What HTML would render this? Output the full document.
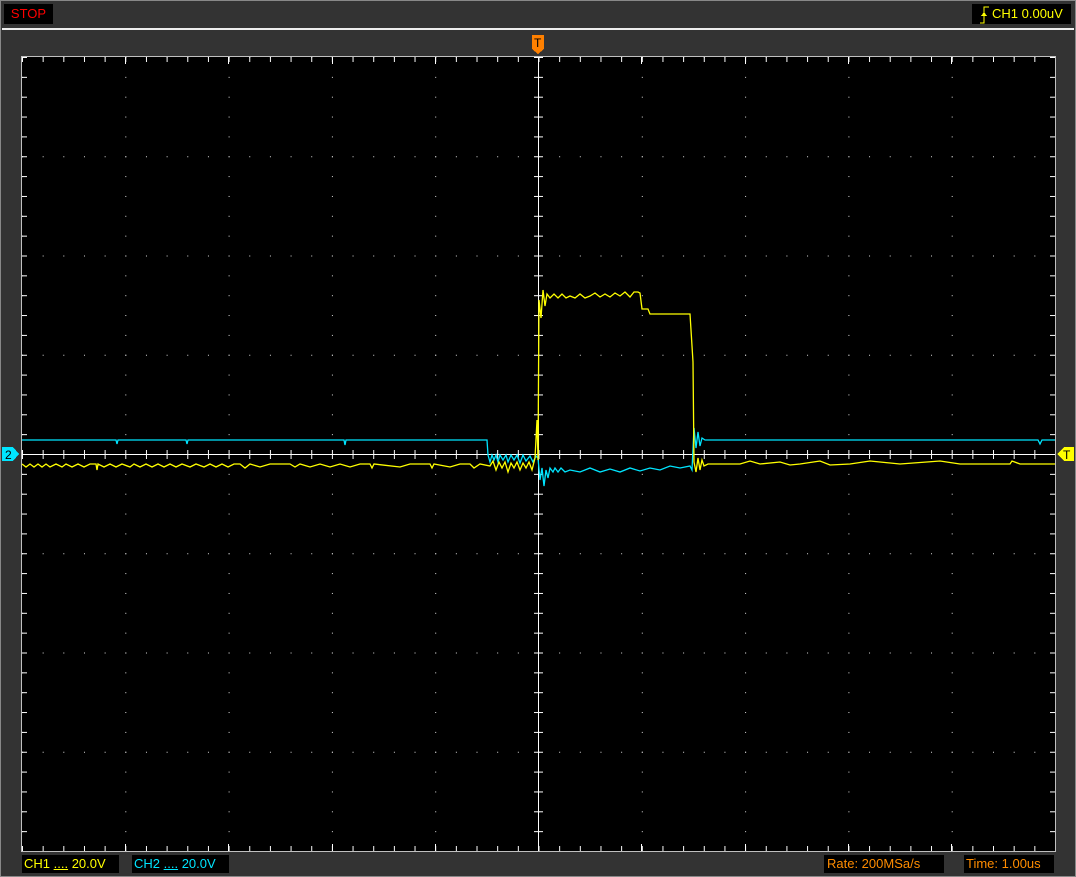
<!DOCTYPE html>
<html><head><meta charset="utf-8"><style>
html,body{margin:0;padding:0;background:#333;}
body{width:1076px;height:877px;position:relative;overflow:hidden;font-family:"Liberation Sans",sans-serif;}
.box{position:absolute;background:#000;font-size:13px;line-height:20px;}
</style></head><body>
<svg width="1076" height="877" style="position:absolute;left:0;top:0" shape-rendering="crispEdges">
<defs>
<pattern id="hd" patternUnits="userSpaceOnUse" x="22" y="57" width="20.66" height="99.25"><rect width="1" height="1" fill="#ddd"/></pattern>
<pattern id="vd" patternUnits="userSpaceOnUse" x="22" y="57" width="103.3" height="19.85"><rect width="1" height="1" fill="#ddd"/></pattern>
<pattern id="ht" patternUnits="userSpaceOnUse" x="22" y="0" width="20.66" height="877"><rect x="0" y="450" width="1" height="9" fill="#fff"/><rect x="0" y="57" width="1" height="5" fill="#fff"/><rect x="0" y="846" width="1" height="5" fill="#fff"/></pattern>
<pattern id="vt" patternUnits="userSpaceOnUse" x="0" y="57" width="1076" height="19.85"><rect x="534" y="0" width="9" height="1" fill="#fff"/><rect x="22" y="0" width="5" height="1" fill="#fff"/><rect x="1050" y="0" width="5" height="1" fill="#fff"/></pattern>
</defs>
<rect x="0" y="0" width="1076" height="877" fill="#333"/>
<rect x="0.5" y="0.5" width="1075" height="876" fill="none" stroke="#888"/>
<rect x="2" y="28" width="1072" height="2" fill="#eee"/>
<rect x="21" y="56" width="1035" height="796" fill="#c0c0c0"/>
<rect x="22" y="57" width="1033" height="794" fill="#000"/>
<rect x="22" y="57" width="1033" height="794" fill="url(#hd)"/>
<rect x="22" y="57" width="1033" height="794" fill="url(#vd)"/>
<rect x="22" y="57" width="1033" height="794" fill="url(#ht)"/>
<rect x="22" y="57" width="1033" height="794" fill="url(#vt)"/>
<rect x="22" y="454" width="1033" height="1" fill="#fff"/>
<rect x="538" y="57" width="1" height="794" fill="#fff"/>
<g fill="#fff">
<rect x="125" y="57" width="1" height="7"/><rect x="228" y="57" width="1" height="7"/><rect x="332" y="57" width="1" height="7"/><rect x="435" y="57" width="1" height="7"/><rect x="641" y="57" width="1" height="7"/><rect x="745" y="57" width="1" height="7"/><rect x="848" y="57" width="1" height="7"/><rect x="951" y="57" width="1" height="7"/>
<rect x="125" y="844" width="1" height="7"/><rect x="228" y="844" width="1" height="7"/><rect x="332" y="844" width="1" height="7"/><rect x="435" y="844" width="1" height="7"/><rect x="641" y="844" width="1" height="7"/><rect x="745" y="844" width="1" height="7"/><rect x="848" y="844" width="1" height="7"/><rect x="951" y="844" width="1" height="7"/>
</g>
<g fill="none" stroke-width="1.3" shape-rendering="auto">
<polyline stroke="#00e5ff" points="22,440 116,440 117,444 118,440 186,440 187,444 188,440 344,440 345,445 346,440 487,440 488,455 490,462 492,455 494,460 496,455 498,462 500,455 503,460 506,455 508,462 511,455 514,460 517,455 520,463 523,455 526,461 530,456 533,462 536,456 538,458 540,480 542,468 544,486 546,470 548,478 550,468 553,472 555,468 558,472 561,468 565,472 570,470 580,472 590,468 600,472 610,469 620,472 630,468 640,471 650,468 660,470 670,466 680,468 690,466 692,470 694,428 696,448 698,432 700,446 702,438 705,440 1038,440 1040,444 1042,440 1055,440"/>
<polyline stroke="#ffff00" points="22,464 26,467 30,464 34,467 38,464 42,467 46,464 50,467 56,464 62,467 66,464 72,467 78,464 84,467 90,464 96,464 97,470 98,464 104,467 110,464 116,467 122,464 130,467 134,464 140,467 146,464 152,467 158,464 164,467 170,464 176,467 182,464 190,467 196,464 204,467 210,464 216,467 222,464 228,467 234,464 240,464 245,468 250,464 260,467 270,464 290,464 295,467 300,464 310,467 320,464 330,467 340,464 350,467 360,464 370,464 372,468 374,464 400,467 410,464 430,464 432,468 434,464 450,467 460,464 470,464 474,468 480,464 490,466 493,461 496,470 499,462 502,468 505,462 508,472 511,463 514,468 517,462 520,470 523,463 526,468 529,462 532,470 535,458 537,420 538,460 539,300 541,318 543,290 545,306 547,294 550,298 554,294 558,298 562,294 566,298 570,296 575,298 580,294 585,298 590,296 595,293 600,297 605,294 610,297 615,293 620,296 625,292 630,297 634,292 638,292 640,293 642,309 648,309 650,314 690,314 693,362 694,462 696,472 698,458 700,470 702,460 704,466 708,464 740,464 750,461 760,464 780,462 790,465 800,464 820,461 830,465 850,464 870,461 880,462 900,464 940,461 960,464 1010,464 1012,461 1020,464 1055,464"/>
</g>
<polygon points="2,447 13,447 19,454 13,461 2,461" fill="#00e5ff"/>
<text x="5" y="459" font-family="Liberation Sans" font-size="12" fill="#000">2</text>
<polygon points="1074,447 1064,447 1057,454 1064,461 1074,461" fill="#ffff00"/>
<text x="1063" y="459" font-family="Liberation Sans" font-size="12" fill="#000">T</text>
<polygon points="532,35 544,35 544,49 538,54 532,49" fill="#ff8000"/>
<text x="534" y="47" font-family="Liberation Sans" font-size="12" fill="#000">T</text>
</svg>
<div class="box" style="left:4px;top:4px;width:49px;height:20px;color:#f00;text-align:center">STOP</div>
<div class="box" style="left:972px;top:4px;width:99px;height:20px;color:#ff0;padding-left:20px;box-sizing:border-box">CH1 0.00uV
<svg width="14" height="20" style="position:absolute;left:4px;top:0" shape-rendering="crispEdges"><polyline points="4,19 8,19 8,3 13,3" fill="none" stroke="#ff0" stroke-width="1"/><polygon points="5,12 11,12 8,8" fill="#ff0"/></svg></div>
<div class="box" style="left:22px;top:855px;width:97px;height:18px;line-height:17px;color:#ff0;padding-left:2px;box-sizing:border-box">CH1 <span style="text-decoration:underline">....</span> 20.0V</div>
<div class="box" style="left:132px;top:855px;width:97px;height:18px;line-height:17px;color:#00e5ff;padding-left:2px;box-sizing:border-box">CH2 <span style="text-decoration:underline">....</span> 20.0V</div>
<div class="box" style="left:824px;top:855px;width:120px;height:18px;line-height:17px;color:#ff8c00;padding-left:3px;box-sizing:border-box">Rate: 200MSa/s</div>
<div class="box" style="left:964px;top:855px;width:90px;height:18px;line-height:17px;color:#ff8c00;padding-left:2px;box-sizing:border-box">Time: 1.00us</div>
</body></html>
